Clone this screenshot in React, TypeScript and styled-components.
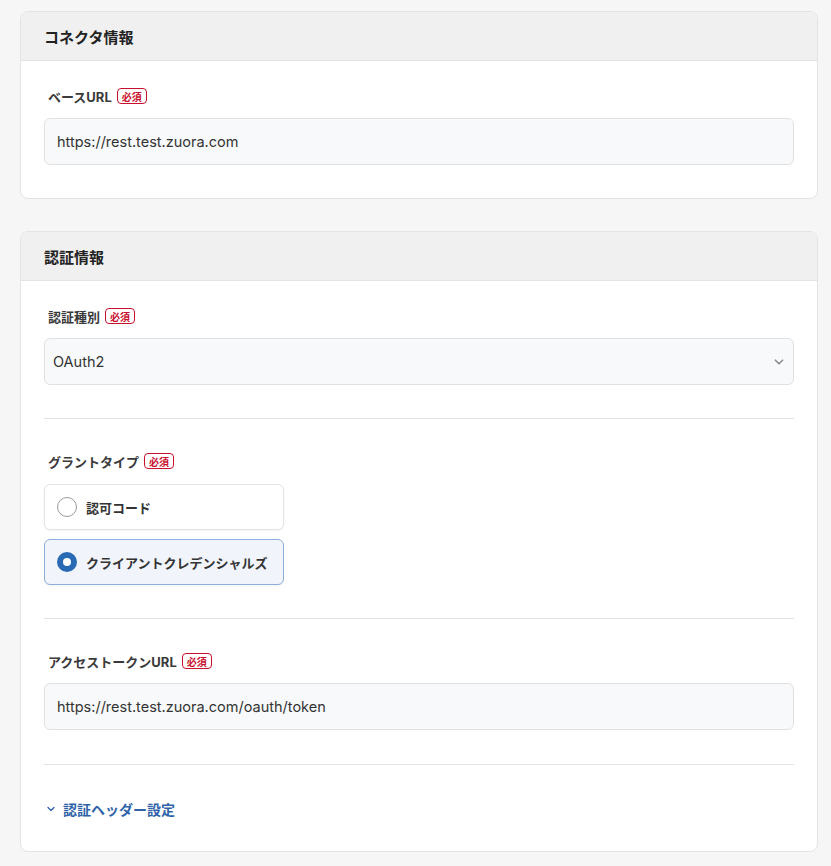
import React, { useState } from "react";
import styled, { createGlobalStyle } from "styled-components";

const GlobalStyle = createGlobalStyle`
  html, body {
    margin: 0;
    padding: 0;
    background: #f6f6f6;
  }
  body {
    font-family: Inter, "Noto Sans CJK JP", sans-serif;
    color: #333;
  }
`;

const Page = styled.div`
  padding: 11px 13px 13px 20px;
  display: flex;
  flex-direction: column;
  gap: 32px;
`;

const Card = styled.section`
  background: #fff;
  border: 1px solid #e3e3e3;
  border-radius: 8px;
  overflow: hidden;
`;

const CardHeader = styled.header`
  height: 48px;
  display: flex;
  align-items: center;
  padding: 0 23px;
  background: #f0f0f0;
  border-bottom: 1px solid #e3e3e3;
  font-size: 15px;
  font-weight: 700;
  color: #222;
`;

const CardBody = styled.div<{ $bottom?: number }>`
  padding: 26px 23px ${(p) => p.$bottom ?? 33}px;
`;

const Field = styled.div`
  display: flex;
  flex-direction: column;
  gap: 13px;
`;

const Label = styled.div`
  display: flex;
  align-items: center;
  gap: 5px;
  padding-left: 4px;
  font-size: 13px;
  font-weight: 700;
  color: #3a3a3a;
  height: 18px;
`;

const Required = styled.span`
  box-sizing: border-box;
  display: inline-flex;
  align-items: center;
  justify-content: center;
  height: 16px;
  padding: 0 4px;
  border: 1px solid #c8102e;
  border-radius: 4px;
  color: #c8102e;
  font-size: 10px;
  font-weight: 700;
`;

const Input = styled.input`
  box-sizing: border-box;
  width: 100%;
  height: 47px;
  padding: 0 12px;
  background: #f8f9fa;
  border: 1px solid #e1e1e1;
  border-radius: 6px;
  font-family: Inter, "Noto Sans CJK JP", sans-serif;
  font-size: 14.5px;
  color: #333;
  outline: none;
`;

const SelectBox = styled.div`
  box-sizing: border-box;
  height: 47px;
  padding: 0 8px 0 8px;
  display: flex;
  align-items: center;
  justify-content: space-between;
  background: #f8f9fa;
  border: 1px solid #e1e1e1;
  border-radius: 6px;
  font-size: 14.5px;
  color: #333;
`;

const Divider = styled.hr<{ $top: number; $bottom: number }>`
  border: none;
  border-top: 1px solid #e3e3e3;
  margin: ${(p) => p.$top}px 0 ${(p) => p.$bottom}px;
`;

const RadioList = styled.div`
  display: flex;
  flex-direction: column;
  gap: 9px;
  width: 240px;
  margin-top: 1px;
`;

const RadioCard = styled.label<{ $checked: boolean }>`
  box-sizing: border-box;
  height: 46px;
  display: flex;
  align-items: center;
  gap: 9px;
  padding: 0 12px;
  border-radius: 6px;
  border: 1px solid ${(p) => (p.$checked ? "#8fb0dc" : "#e4e4e4")};
  background: ${(p) => (p.$checked ? "#f1f5fb" : "#fff")};
  box-shadow: 0 1px 2px rgba(0, 0, 0, 0.05);
  font-size: 13px;
  font-weight: 700;
  color: #333;
  cursor: pointer;
`;

const RadioDot = styled.span<{ $checked: boolean }>`
  box-sizing: border-box;
  width: 20px;
  height: 20px;
  border-radius: 50%;
  border: ${(p) => (p.$checked ? "6px solid #2a69b4" : "1px solid #9a9a9a")};
  background: #fff;
  flex-shrink: 0;
`;

const ToggleLink = styled.button`
  height: 18px;
  display: flex;
  align-items: center;
  gap: 7px;
  padding: 0 0 0 2px;
  background: none;
  border: none;
  font-family: Inter, "Noto Sans CJK JP", sans-serif;
  font-size: 14px;
  font-weight: 700;
  color: #2e63a8;
  cursor: pointer;
`;

const Chevron = ({ color, size }: { color: string; size: number }) => (
  <svg width={size} height={size} viewBox="0 0 10 10" fill="none">
    <path
      d="M2 3.5L5 6.5L8 3.5"
      stroke={color}
      strokeWidth="1.3"
      strokeLinecap="round"
      strokeLinejoin="round"
    />
  </svg>
);

export default function App(): JSX.Element {
  const [grant, setGrant] = useState("client");

  return (
    <Page>
      <GlobalStyle />
      <Card>
        <CardHeader>コネクタ情報</CardHeader>
        <CardBody>
          <Field>
            <Label>
              ベースURL<Required>必須</Required>
            </Label>
            <Input defaultValue="https://rest.test.zuora.com" />
          </Field>
        </CardBody>
      </Card>

      <Card>
        <CardHeader>認証情報</CardHeader>
        <CardBody $bottom={33}>
          <Field>
            <Label>
              認証種別<Required>必須</Required>
            </Label>
            <SelectBox>
              OAuth2
              <Chevron color="#8a8a8a" size={12} />
            </SelectBox>
          </Field>

          <Divider $top={33} $bottom={33} />

          <Field>
            <Label>
              グラントタイプ<Required>必須</Required>
            </Label>
            <RadioList>
              <RadioCard
                $checked={grant === "code"}
                onClick={() => setGrant("code")}
              >
                <RadioDot $checked={grant === "code"} />
                認可コード
              </RadioCard>
              <RadioCard
                $checked={grant === "client"}
                onClick={() => setGrant("client")}
              >
                <RadioDot $checked={grant === "client"} />
                クライアントクレデンシャルズ
              </RadioCard>
            </RadioList>
          </Field>

          <Divider $top={33} $bottom={33} />

          <Field>
            <Label>
              アクセストークンURL<Required>必須</Required>
            </Label>
            <Input defaultValue="https://rest.test.zuora.com/oauth/token" />
          </Field>

          <Divider $top={34} $bottom={35} />

          <ToggleLink>
            <Chevron color="#2e63a8" size={10} />
            認証ヘッダー設定
          </ToggleLink>
        </CardBody>
      </Card>
    </Page>
  );
}
